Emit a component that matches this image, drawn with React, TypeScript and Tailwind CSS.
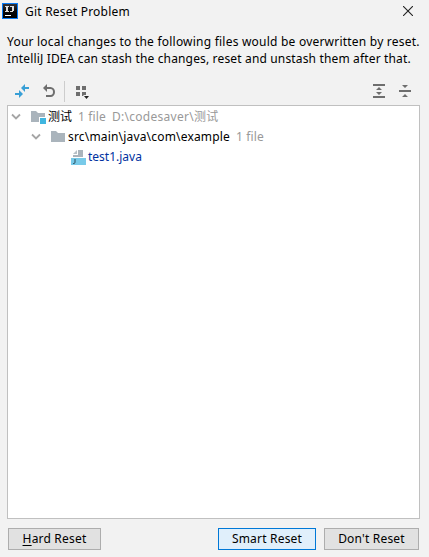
import type { ReactNode } from "react";

function Logo() {
  return (
    <svg width="16" height="16" viewBox="0 0 16 16" shapeRendering="crispEdges">
      <defs>
        <linearGradient id="logoFill" x1="0" y1="0" x2="0" y2="1">
          <stop offset="0" stopColor="#33343a" />
          <stop offset="0.5" stopColor="#08080a" />
          <stop offset="1" stopColor="#000" />
        </linearGradient>
      </defs>
      <rect width="16" height="16" fill="#087cfa" />
      <rect x="1" y="1" width="14" height="14" fill="url(#logoFill)" />
      <path d="M3 3.5h4M8 3.5h4M3 8.5h4M8 8.5h3" stroke="#ddd" fill="none" />
      <path d="M4 3h2v6H4zM10 3h2v5h-2z" fill="#ddd" />
      <path d="M3 12h6v1H3z" fill="#fff" />
    </svg>
  );
}

function CompareIcon() {
  return (
    <svg width="16" height="16" viewBox="0 0 16 16" fill="#389fd6">
      <path d="M11 1v3h4v2h-4v3L7 5z" />
      <path d="M5 7v3H1v2h4v3l4-4z" />
    </svg>
  );
}

function UndoIcon() {
  return (
    <svg width="16" height="16" viewBox="0 0 16 16" fill="none" stroke="#6e6e6e" strokeWidth="2">
      <path d="M5 5h4.5a3.5 4 0 0 1 0 8H5" />
      <path d="M2 5l4-4v8z" fill="#6e6e6e" stroke="none" />
    </svg>
  );
}

function GroupIcon() {
  return (
    <svg width="16" height="16" viewBox="0 0 16 16" fill="#6e6e6e">
      <path d="M2 3h4v4H2zM8 3h4v4H8zM2 9h4v4H2zM8 9h4v4H8z" />
      <path d="M9 12h7l-3.5 4z" fill="#f2f2f2" />
      <path d="M10 13h5l-2.5 3z" fill="#222" />
    </svg>
  );
}

function ExpandIcon() {
  return (
    <svg width="16" height="16" viewBox="0 0 16 16" fill="#6e6e6e">
      <path d="M2 1h12v2H2zM2 13h12v2H2zM8 4l3 3H5zM8 12L5 9h6z" />
    </svg>
  );
}

function CollapseIcon() {
  return (
    <svg width="16" height="16" viewBox="0 0 16 16" fill="#6e6e6e">
      <path d="M2 7h12v2H2zM8 5L5 2h6zM8 11l3 3H5z" />
    </svg>
  );
}

function Chevron() {
  return (
    <svg width="10" height="8" viewBox="0 0 10 8" fill="none" stroke="#a5a5a5" strokeWidth="1.8">
      <path d="M1 1.5l4 4 4-4" />
    </svg>
  );
}

function FolderIcon({ module = false }: { module?: boolean }) {
  return (
    <svg width="16" height="16" viewBox="0 0 16 16">
      <path d="M1 2h5l2 2h7v9H1z" fill="#aab4bc" />
      {module && <path d="M9 8h7v8H9z" fill="#fff" />}
      {module && <path d="M10 9h6v6h-6z" fill="#40b6e0" />}
    </svg>
  );
}

function JavaFileIcon() {
  return (
    <svg width="16" height="16" viewBox="0 0 16 16">
      <path d="M7 1v4H3z" fill="#b8c1c7" />
      <path d="M8 1h5v7H3V6h5z" fill="#aab4bc" />
      <path d="M1 9h15v7H1z" fill="#78cae9" />
      <path d="M5 10v3.3q0 1.2-1.2 1.2H3" fill="none" stroke="#294c5b" />
    </svg>
  );
}

function Button({ children, className }: { children: ReactNode; className: string }) {
  return (
    <button className={`flex h-[22px] items-center justify-center border pb-px text-[12px] tracking-[0.2px] ${className}`}>
      <span className="whitespace-nowrap">{children}</span>
    </button>
  );
}

export default function App() {
  return (
    <main className="flex h-[557px] w-[429px] flex-col overflow-hidden bg-[#f2f2f2] font-['Noto_Sans','Noto_Sans_CJK_SC',sans-serif] text-[12px] text-black">
      <header className="flex h-[25px] items-center pl-[2px] pr-4">
        <span className="-mt-[3px] flex"><Logo /></span>
        <h1 className="ml-[7px] -mt-px leading-4 tracking-[0.22px]">Git Reset Problem</h1>
        <svg className="-mt-[3px] ml-auto" width="10" height="10" viewBox="0 0 10 10" fill="none" stroke="#222" strokeWidth="1.1">
          <path d="M0 0l10 10M10 0L0 10" />
        </svg>
      </header>
      <div className="h-[53px] whitespace-nowrap pl-[7px] pt-2 leading-[17px]">
        <p className="tracking-[0.22px]">Your local changes to the following files would be overwritten by reset.</p>
        <p className="tracking-[0.155px]">IntelliJ IDEA can stash the changes, reset and unstash them after that.</p>
      </div>
      <div className="flex h-[27px] items-center pb-px pl-[14px] pr-4">
        <CompareIcon />
        <span className="ml-[11px] flex"><UndoIcon /></span>
        <span className="ml-[7px] h-[21px] w-px bg-[#cdcdcd]" />
        <span className="ml-[9px] flex"><GroupIcon /></span>
        <span className="ml-auto flex gap-[10px]"><ExpandIcon /><CollapseIcon /></span>
      </div>
      <section className="ml-[7px] h-[414px] w-[413px] border border-[#c0c0c0] bg-white pt-px whitespace-nowrap">
        <div className="flex h-5 items-center pl-[3px]">
          <Chevron />
          <span className="ml-[9px] flex"><FolderIcon module /></span>
          <span className="ml-[2px]">测试</span>
          <span className="ml-[6px] tracking-[0.15px] text-[#999999]">1 file</span>
          <span className="ml-[6px] tracking-[0.27px] text-[#999999]">D:\codesaver\测试</span>
        </div>
        <div className="flex h-5 items-center pl-[23px]">
          <Chevron />
          <span className="ml-[9px] flex"><FolderIcon /></span>
          <span className="ml-[2px] tracking-[0.18px]">src\main\java\com\example</span>
          <span className="ml-[6px] tracking-[0.15px] text-[#999999]">1 file</span>
        </div>
        <div className="flex h-5 items-center pl-[62px]">
          <JavaFileIcon />
          <span className="ml-[2px] text-[#0032a0]">test1.java</span>
        </div>
      </section>
      <footer className="mt-[9px] flex pl-2">
        <Button className="w-[93px] border-[#adadad] bg-[#e1e1e1]"><u className="underline-offset-2">H</u>ard Reset</Button>
        <Button className="ml-[117px] w-[98px] border-[#0078d7] bg-[#e0effb]">Smart Reset</Button>
        <Button className="ml-2 w-[95px] border-[#adadad] bg-[#e1e1e1]">Don't Reset</Button>
      </footer>
    </main>
  );
}
